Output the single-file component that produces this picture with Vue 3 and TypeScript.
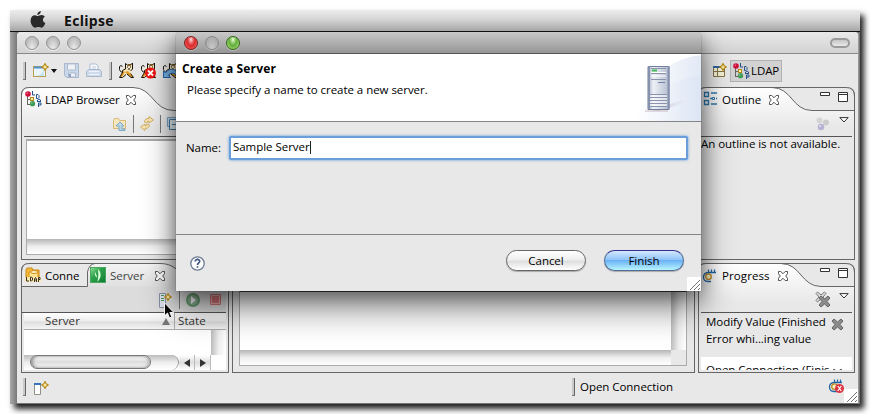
<script setup lang="ts">
interface Task { title: string; detail: string }

const menuTitle = 'Eclipse'
const serverName = 'Sample Server'
const tasks: Task[] = [
  { title: 'Modify Value (Finished', detail: 'Error whi...ing value' },
  { title: 'Open Connection (Finis', detail: '' },
]
const cats = ['plain', 'stop', 'reload']
</script>

<template>
  <div class="stage">
    <svg class="defs" width="0" height="0">
      <defs>
        <linearGradient id="tabfill" x1="0" y1="0" x2="0" y2="1">
          <stop offset="0" stop-color="#fff" /><stop offset="1" stop-color="#e8e8e8" />
        </linearGradient>
        <linearGradient id="servfill" x1="0" y1="0" x2="0" y2="1">
          <stop offset="0" stop-color="#f4f4f4" /><stop offset="1" stop-color="#dedede" />
        </linearGradient>
        <linearGradient id="greenfill" x1="0" y1="0" x2="1" y2="1">
          <stop offset="0" stop-color="#8fe09a" /><stop offset=".4" stop-color="#2fa34b" /><stop offset="1" stop-color="#0c7c33" />
        </linearGradient>
        <symbol id="close" viewBox="0 0 11 11">
          <path d="M.5.5H3L5.5 3 8 .5h2.500V3L8.500 5.500l2 2.500v2.500H8L5.500 8 3 10.500H.5V8l2-2.500L.5 3z" fill="#fff" stroke="#3c3c3c" />
        </symbol>
        <symbol id="ldap" viewBox="0 0 17 16">
          <path d="M2.500 4v10M2 8.500h5M2 13.500h5" stroke="#666" fill="none" />
          <circle cx="3" cy="3" r="2.800" fill="#d0103c" /><circle cx="2.300" cy="2.200" r=".8" fill="#f27a94" />
          <rect x="5.500" y="6.500" width="3" height="3" fill="#fff3a0" stroke="#b58619" />
          <circle cx="7.500" cy="12.700" r="2.600" fill="#3d9b54" /><circle cx="6.800" cy="12" r=".8" fill="#8fd09c" />
          <path d="M7.500 0v4h2.500M11.500 3.500v4h1.500l1-1V4.500l-1-1zM12.500 11V9l1.500-1 1.500 1v2M12.500 10.500h3M13.500 16v-4H16v2h-2" fill="none" stroke="#24508c" stroke-width="1" />
        </symbol>
        <symbol id="cat" viewBox="0 0 17 17">
          <path d="M8 2l2 1h3l2-2v6l-2 2 1 3 2 3h-3l-4-3-4 3H2l3-5-1-3 4-2z" fill="#f3e3bd" />
          <path d="M7 10l3-1 5 6h-2l-4-3zM5 9l2 1-3 5H2z" fill="#e09a1f" />
          <path d="M10 3h3" stroke="#d9a34c" stroke-width="2" />
          <path d="M7.500 7V1.500l2 1.500h3l2-2v6l-2 2M7.500 7l-3 1.500v2l-3 5h3l3.500-3M2.500 9.500l-1-2v-3l1.500-1 1.500 1M2.500 9.500l2 1M9 12l4 3.500h2.500l-3-4" stroke="#19130a" fill="none" />
          <path d="M9 5h1M12 5h1M10 7h2" stroke="#111" />
        </symbol>
        <symbol id="spark" viewBox="0 0 7 7">
          <path d="M3.500.5l1 2 2 1-2 1-1 2-1-2-2-1 2-1z" fill="#fff5b8" stroke="#b88a17" />
        </symbol>
        <symbol id="tri" viewBox="0 0 10 6"><path d="M.8.6h8.400L5 5z" fill="#fff" stroke="#333" /></symbol>
        <symbol id="min" viewBox="0 0 10 4"><path d="M.5.5h9v3h-9z" fill="#fff" stroke="#333" /></symbol>
        <symbol id="max" viewBox="0 0 10 10"><path d="M.5.5h9v9h-9zM.5 2.500h9" fill="#fff" stroke="#333" /></symbol>
        <symbol id="progress" viewBox="0 0 16 15">
          <path d="M14 4.500H7C3 4.500 1.500 6.500 1.500 9s1.500 4.500 4.500 4.500h3" fill="none" stroke="#2366a5" stroke-width="1.300" />
          <path d="M6.500 1.500v3M9.500 1.500v3M12.500 1.500v3" stroke="#2366a5" stroke-width="1.200" />
          <circle cx="6.500" cy="8.700" r="2.800" fill="#fff1bd" stroke="#b88b26" stroke-width="1.300" />
        </symbol>
        <symbol id="cross" viewBox="0 0 13 13">
          <path d="M1 3l2-2 3.500 3L10 1l2 2-3 3.500 3 3.500-2 2-3.500-3L3 12l-2-2 3-3.500z" fill="#8b8b8b" stroke="#666" />
        </symbol>
        <symbol id="grip" viewBox="0 0 14 14">
          <path d="M0 0h14v14H0z" fill="#fff" /><path d="M3 13L13 3M7 13l6-6M11 13l2-2" stroke="#777" />
        </symbol>
      </defs>
    </svg>

    <div class="screen">
      <header class="menubar">
        <svg class="apple" width="16" height="18" viewBox="0 0 16 18">
          <path d="M10.800 0c.2 2-1.600 4-3.500 3.900C7.100 2 9 .2 10.800 0zM8 5c.7 0 2-1 3.800-.9 1.200.1 2.300.6 3 1.600-2.700 1.800-2.300 5.200.6 6.400-.8 2.200-2.200 4.700-3.900 4.700-1.200 0-1.700-.7-3.100-.7s-2 .7-3.100.7C2.800 16.800.5 12.700.6 9.500.7 6 2.700 4.200 5 4.200 6.300 4.200 7.300 5 8 5z" fill="#292929" />
        </svg>
        <b>{{ menuTitle }}</b>
      </header>

      <div class="desktop">
        <section class="window">
          <div class="titlebar">
            <i class="light"></i><i class="light"></i><i class="light"></i>
            <i class="pill"></i>
          </div>

          <div class="toolbar">
            <i class="handle"></i>
            <svg class="t-new" width="16" height="16" viewBox="0 0 16 16">
              <rect x=".5" y="3.500" width="12" height="10" fill="#e9f5fd" stroke="#b99d50" />
              <path d="M1 4.500h11" stroke="#4f91d2" stroke-width="2" />
              <path d="M2 13c5 0 8-3 9-8v8z" fill="#c6e4f7" />
              <use href="#spark" x="8" y="0" width="8" height="8" />
            </svg>
            <svg class="t-arrow" width="6" height="4"><path d="M0 0h6L3 4z" fill="#111" /></svg>
            <svg class="t-save" width="15" height="15" viewBox="0 0 15 15">
              <path d="M.5.5h14v14H2.500l-2-2z" fill="#c9d6e6" stroke="#a9b8cf" /><path d="M3.500 1v6h8V1z" fill="#eef2f7" stroke="#b0bdd1" />
              <path d="M4.500 14v-4h7v4z" fill="#eef2f7" stroke="#a9b8cf" /><path d="M6 11v3" stroke="#8fa1bf" stroke-width="2" />
            </svg>
            <svg class="t-print" width="16" height="15" viewBox="0 0 16 15">
              <path d="M4 8V1h6l2 2v5" fill="#f7f9fc" stroke="#b0bdd1" /><path d="M6 4h4M6 6h4" stroke="#c0ccdd" />
              <path d="M.5 8.500l2-2h11l2 2v5h-15z" fill="#cddaea" stroke="#a9b8cf" /><path d="M3 8.500h10M3 11.500h10" stroke="#eef3fa" />
            </svg>
            <i class="handle"></i>
            <svg v-for="c in cats" :key="c" class="cat" width="17" height="17" viewBox="0 0 17 17">
              <use href="#cat" width="17" height="17" />
              <g v-if="c === 'stop'"><circle cx="10.500" cy="11" r="5.500" fill="#ed1515" /><path d="M8 8.500l5 5M13 8.500l-5 5" stroke="#fff" stroke-width="1.800" /></g>
              <path v-if="c === 'reload'" d="M1.500 15.500V9l2 2c3-5 9-5 12 0v4c-2-4-6-5-9-2l2 2.500z" fill="#75b5e9" stroke="#2a65ab" />
            </svg>
            <span class="grow"></span>
            <svg class="t-open" width="14" height="15" viewBox="0 0 14 15">
              <path d="M.5 3.500h11v10H.5zM.5 8.500h11M4.500 5v8" fill="#f5f2da" stroke="#837443" /><path d="M0 4h9" stroke="#31659d" stroke-width="2" />
              <use href="#spark" x="6" y="0" width="8" height="8" />
            </svg>
            <span class="perspective"><svg width="17" height="16"><use href="#ldap" width="17" height="16" /></svg><span>LDAP</span></span>
          </div>

          <div class="workbench">
            <div class="column left">
              <article class="panel upper">
                <svg class="frame" width="208" height="40">
                  <path d="M1 40V8Q1 1 8 1H112C132 1 132 23.500 153 23.500H207V40z" fill="url(#tabfill)" />
                  <path d="M.5 40V8Q.5.500 8 .5H112C132 .5 132 23.500 153 23.500H208" fill="none" stroke="#666" />
                </svg>
                <div class="tabs">
                  <svg class="tabicon" width="17" height="16"><use href="#ldap" width="17" height="16" /></svg>
                  <span class="tab-browser">LDAP Browser</span>
                  <svg class="x" width="10" height="10"><use href="#close" width="10" height="10" /></svg>
                </div>
                <div class="tools browser-tools">
                  <svg width="14" height="14" viewBox="0 0 14 14"><path d="M.5 3.500l1-2h4l1 2h6v8H.5z" fill="#f6e6bd" stroke="#d8b977" /><path d="M7 5l4 4H9v3h3v1.500H6V9H3z" fill="#b9d6e6" stroke="#7da9c3" /></svg>
                  <i class="sep"></i>
                  <svg width="14" height="15" viewBox="0 0 14 15"><path d="M4.500 6C4.500 3.500 6 2.500 9 2.500v-2l4.500 3.500L9 7V5Q7 5 7 7zM9.500 9c0 2.500-2 3.500-4.500 3.500v2L.5 11 5 8v2q2 0 2-2z" fill="#f7e5b2" stroke="#d0ad65" /></svg>
                  <i class="sep"></i>
                  <svg width="12" height="13" viewBox="0 0 12 13"><path d="M.5.5h10v9H.5z" fill="#c7dff0" stroke="#7ba3c0" /><path d="M2.500 2.500h9v10h-9zM5 7.500h6" fill="#e7f2f8" stroke="#477da7" /></svg>
                </div>
                <div class="tree"><div class="tree-body"></div><div class="track"></div></div>
              </article>

              <article class="panel lower">
                <svg class="frame" width="208" height="25">
                  <path d="M66 25V9Q68 1 74 1H139C157 1 160 12 169 18L180 24H208V25z" fill="url(#servfill)" />
                  <path d="M.5 25V8Q.5.500 8 .5H139C157 .5 160 14 169 19Q174 23.500 184 23.500H208M0 23.500H66.500V9Q68 1 74 .5" fill="none" stroke="#666" />
                </svg>
                <div class="tabs">
                  <svg class="tabicon" width="16" height="16" viewBox="0 0 16 16">
                    <path d="M1 3l1-2h5l1 2h6v8H1z" fill="#f5b93c" stroke="#c8870f" /><path d="M4 5h9v7H4z" fill="#ffe391" stroke="#d79417" /><ellipse cx="9" cy="5" rx="3.500" ry="1.500" fill="#fff5cf" stroke="#d08c17" />
                    <path d="M0 10h16v5H0z" fill="#fbe7b0" />
                    <path d="M1.500 10v4h2.500M5.500 10v4h1l1-1v-2l-1-1zM9.500 15v-3l1-1.500 1 1.500v3M9.500 13h2M13.500 15v-4.500H15v2h-1.500" fill="none" stroke="#3b3424" />
                  </svg>
                  <span class="tab-conne">Conne</span>
                  <svg class="server-icon" width="16" height="16" viewBox="0 0 16 16"><rect x=".5" y=".5" width="15" height="15" fill="url(#greenfill)" stroke="#4aa65d" /><path d="M7.500 15Q9 8 8 2q4 4 2 9-1 2-2.500 4zM5 5q-1 3 2 6-.5-4-2-6z" fill="#ddffd9" /></svg>
                  <span class="tab-server">Server</span>
                  <svg class="x" width="10" height="10"><use href="#close" width="10" height="10" /></svg>
                </div>
                <div class="tools server-tools">
                  <svg width="14" height="16" viewBox="0 0 14 16"><path d="M.5 1.500h6v14h-6z" fill="#dfe3f0" stroke="#8790a3" /><path d="M2 3.500h3M2 6.500h3M2 8.500h3" stroke="#4d9b55" /><use href="#spark" x="5" y="1" width="8" height="8" /></svg>
                  <i class="sep"></i>
                  <svg width="14" height="14" viewBox="0 0 14 14"><circle cx="7" cy="7" r="6" fill="#8cb294" stroke="#659e70" stroke-width="2" /><path d="M5 3l5 4-5 4z" fill="#fff" /></svg>
                  <svg width="11" height="11" viewBox="0 0 11 11"><path d="M.5.5h10v10H.5z" fill="#eab2b2" stroke="#ce7777" /><path d="M2 2h7v7H2z" fill="#d8767a" /></svg>
                </div>
                <div class="table">
                  <div class="thead"><span class="th-server">Server</span><svg width="8" height="7"><path d="M4 0l4 7H0z" fill="#777" /></svg><span class="th-state">State</span></div>
                  <div class="tbody"><div class="rows"></div><div class="vtrack"></div></div>
                  <div class="hscroll">
                    <div class="rail"><i class="thumb"></i></div>
                    <span class="arrow"><svg width="6" height="8"><path d="M6 0v8L0 4z" fill="#333" /></svg></span>
                    <span class="arrow"><svg width="6" height="8"><path d="M0 0v8l6-4z" fill="#333" /></svg></span>
                  </div>
                </div>
              </article>
            </div>

            <div class="panel middle">
              <div class="editor">
                <div class="canvas"></div><div class="vtrack"></div>
                <div class="track"></div><div class="corner"></div>
              </div>
            </div>

            <div class="column right">
              <article class="panel upper">
                <svg class="frame" width="157" height="40">
                  <path d="M1 40V8Q1 1 8 1H74C94 1 94 23.500 114 23.500H156V40z" fill="url(#tabfill)" />
                  <path d="M.5 40V8Q.5.500 8 .5H148Q156.500.500 156.500 9M74 .5C94 .5 94 23.500 114 23.500H157" fill="none" stroke="#666" />
                </svg>
                <div class="tabs right-tabs">
                  <svg width="16" height="16" viewBox="0 0 16 16"><path d="M2.500 1.500h4v4h-4zM2.500 9.500h4v4h-4z" fill="#e6f3fb" stroke="#3179ad" stroke-width="1.300" /><path d="M9 2h6M9 13h6M8 7.500h2M14 7.500h1" stroke="#3179ad" stroke-width="1.300" /><path d="M10.500 6.500h2v2h-2z" fill="#fff" stroke="#3179ad" /></svg>
                  <span class="tab-outline">Outline</span>
                  <svg class="x" width="10" height="10"><use href="#close" width="10" height="10" /></svg>
                  <span class="grow"></span>
                  <svg class="ctl" width="10" height="4"><use href="#min" /></svg>
                  <svg class="ctl" width="10" height="10"><use href="#max" /></svg>
                </div>
                <div class="tools right-tools">
                  <svg class="balls" width="14" height="14" viewBox="0 0 14 14"><circle cx="3.500" cy="3.500" r="3" fill="#d5d5d5" /><circle cx="10" cy="5.500" r="3" fill="#cbcbcb" /><circle cx="5" cy="10" r="3.300" fill="#b8b3d4" /><circle cx="4" cy="9" r="1" fill="#e5e3ef" /></svg>
                  <svg class="ctl" width="10" height="6"><use href="#tri" /></svg>
                </div>
                <p class="empty">An outline is not available.</p>
              </article>

              <article class="panel lower">
                <svg class="frame" width="157" height="40">
                  <path d="M1 40V8Q1 1 8 1H83C103 1 103 23.500 123 23.500H156V40z" fill="url(#tabfill)" />
                  <path d="M.5 40V8Q.5.500 8 .5H148Q156.500.500 156.500 9M83 .5C103 .5 103 23.500 123 23.500H157" fill="none" stroke="#666" />
                </svg>
                <div class="tabs right-tabs">
                  <svg class="progicon" width="16" height="15"><use href="#progress" /></svg>
                  <span class="tab-progress">Progress</span>
                  <svg class="x" width="10" height="10"><use href="#close" width="10" height="10" /></svg>
                  <span class="grow"></span>
                  <svg class="ctl" width="10" height="4"><use href="#min" /></svg>
                  <svg class="ctl" width="10" height="10"><use href="#max" /></svg>
                </div>
                <div class="tools right-tools">
                  <svg class="clear" width="16" height="17" viewBox="0 0 16 17"><path d="M1 2.500L2.500 1l3.500 3 3.500-3L11 2.500 8 6l3 3.500L9.500 11 6 8l-3.500 3L1 9.500 4 6z" fill="#ddd" stroke="#777" /><use href="#cross" x="3" y="4" width="13" height="13" /></svg>
                  <svg class="ctl" width="10" height="6"><use href="#tri" /></svg>
                </div>
                <div class="tasks">
                  <div v-for="t in tasks" :key="t.title" class="task">
                    <div><p>{{ t.title }}</p><p v-if="t.detail">{{ t.detail }}</p></div>
                    <svg width="13" height="13"><use href="#cross" /></svg>
                  </div>
                </div>
              </article>
            </div>
          </div>

          <footer class="status">
            <i class="handle"></i>
            <svg class="fast" width="15" height="15" viewBox="0 0 15 15"><path d="M.5 2.500h6v11h-6z" fill="#fff" stroke="#909184" /><path d="M0 3h7" stroke="#3975b6" stroke-width="2" /><use href="#spark" x="7" y="0" width="8" height="8" /></svg>
            <i class="handle second"></i>
            <span class="job">Open Connection</span>
            <span class="grow"></span>
            <svg class="job-icon" width="17" height="16" viewBox="0 0 17 16"><use href="#progress" width="16" height="15" /><circle cx="11.500" cy="10.500" r="4.500" fill="#dd3542" /><path d="M9.800 8l3.500 5M13.300 8l-3.500 5" stroke="#fff" stroke-width="1.200" /></svg>
            <svg class="grip" width="14" height="14"><use href="#grip" /></svg>
          </footer>
        </section>

        <section class="dialog">
          <div class="dialog-title"><i class="light red"></i><i class="light dim"></i><i class="light green"></i></div>
          <div class="banner">
            <div class="copy"><h1>Create a Server</h1><p>Please specify a name to create a new server.</p></div>
            <svg width="82" height="67" viewBox="0 0 82 67">
              <defs>
                <linearGradient id="arc" x1="0" x2="1"><stop offset="0" stop-color="#fff" /><stop offset="1" stop-color="#dbe4f4" /></linearGradient>
                <linearGradient id="shade" x1="0" x2="1"><stop offset="0" stop-color="#9c8fa8" stop-opacity=".6" /><stop offset="1" stop-color="#c8bccb" stop-opacity="0" /></linearGradient>
                <linearGradient id="tower" x1="0" x2="1"><stop offset="0" stop-color="#a3afc6" /><stop offset=".25" stop-color="#edf1f6" /><stop offset="1" stop-color="#b4bdd1" /></linearGradient>
              </defs>
              <path d="M35 25Q54 4 82 1v66H20Q26 42 35 25z" fill="url(#arc)" opacity=".8" />
              <path d="M15 67Q33 30 82 21v46z" fill="url(#arc)" opacity=".8" />
              <path d="M32 56l32-10q8-1-2 4L40 57z" fill="url(#shade)" />
              <path d="M29 12.500h21v43H29z" fill="url(#tower)" stroke="#747f9b" />
              <path d="M30 12v43M49.500 12v43" stroke="#8591ad" stroke-width="2" />
              <path d="M32 14.500h15M32 19.500h15M32 25.500h15M31 40.500h17M31 43.500h17M31 46.500h17M31 49.500h17M31 52.500h17" stroke="#8993ac" />
              <path d="M32 18.500h15M32 22h15M31 42h17M31 45h17M31 48h17M31 51h17" stroke="#fff" />
              <path d="M33 16.500h5" stroke="#42b950" stroke-width="2" /><path d="M39 28.500h7" stroke="#7483aa" /><path d="M26 57h23" stroke="#c9b9bd" />
            </svg>
          </div>
          <div class="form"><label for="server-name">Name:</label><div id="server-name" class="field">{{ serverName }}<i class="caret"></i></div></div>
          <div class="actions">
            <svg class="help" width="15" height="15" viewBox="0 0 15 15"><circle cx="7.500" cy="7.500" r="6.700" fill="#fff" stroke="#6d7b94" stroke-width="1.300" /><path d="M5.200 5.500C5.200 2.500 10 3 9.700 5.500 9.500 7 7.500 7 7.500 9M7.500 10.200v1.600" fill="none" stroke="#3e5580" stroke-width="1.700" /></svg>
            <span class="grow"></span>
            <button type="button">Cancel</button>
            <button type="button" class="primary">Finish</button>
            <svg class="grip" width="14" height="14"><use href="#grip" /></svg>
          </div>
        </section>

        <svg class="pointer" width="11" height="17" viewBox="0 0 11 17"><path d="M.5.8v13l3-2.800 2 5 2.300-1-2-4.500h4z" fill="#050505" stroke="#fff" stroke-width=".9" /></svg>
      </div>
    </div>
  </div>
</template>

<style>
html, body { margin: 0; background: #fff; }
</style>
<style scoped>
* { box-sizing: border-box; }
svg { display: block; flex: none; }
i { display: block; flex: none; }
p, h1 { margin: 0; }
.defs { position: absolute; }
.grow { flex: 1; }
.stage { width: 870px; height: 414px; padding: 10px; overflow: hidden; background: #fff; font: 11.5px/16px "Open Sans", "Noto Sans", sans-serif; color: #000; letter-spacing: -.04px; white-space: nowrap; }
.screen { width: 850px; height: 394px; box-shadow: 4px 5px 6px rgba(0, 0, 0, .88); }
.menubar { height: 22px; display: flex; align-items: center; padding-left: 20px; background: linear-gradient(#ececec, #d5d5d5 45%, #a6a6a6); border-bottom: 1px solid #111; }
.menubar b { margin-left: 18px; font-size: 14px; line-height: 20px; font-weight: 700; letter-spacing: .3px; color: #111; }
.apple { margin-top: -1px; }
.desktop { position: relative; height: 372px; overflow: hidden; padding-left: 7px; background: linear-gradient(90deg, #aaa, #777 7px, #777); }
.window { width: 842px; height: 372px; background: #e8e8e8; border-radius: 4px 4px 0 0; border-right: 1px solid #999; border-bottom: 1px solid #777; }
.titlebar, .dialog-title { height: 22px; display: flex; align-items: center; padding-left: 8px; gap: 7px; border-bottom: 1px solid #898989; border-radius: 4px 4px 0 0; background: linear-gradient(#e9e9e9, #d2d2d2); }
.light { width: 14px; height: 14px; border-radius: 50%; border: 1px solid #929292; background: radial-gradient(ellipse at 50% 100%, #eee, #c0c0c0 65%, #b5b5b5); box-shadow: 0 1px #f1f1f1; }
.dialog-title .light { box-shadow: 0 1px #bbb; }
.dim { border-color: #888; background: radial-gradient(ellipse at 50% 100%, #ccc, #aeaeae 65%, #a5a5a5); }
.red { border-color: #762323; background: radial-gradient(ellipse at 50% 22%, #ffe3e3 0, #f28989 18%, #d92c2f 45%, #f0534f 80%, #ff9b8d); }
.green { border-color: #37651f; background: radial-gradient(ellipse at 50% 22%, #f2ffe6 0, #a6d983 20%, #63ad3d 45%, #9cd767 80%, #d1f499); }
.pill { width: 20px; height: 10px; margin-left: auto; margin-right: 8px; border: 2px solid #9a9a9a; border-radius: 5px; background: linear-gradient(#c5c5c5, #e9e9e9); }
.toolbar { height: 33px; display: flex; align-items: center; padding: 0 76px 0 6px; }
.handle { width: 3px; height: 18px; background: #c9c9c9; border-right: 1px solid #666; border-bottom: 1px solid #777; }
.t-new { margin-left: 7px; }
.t-arrow { margin-left: 2px; }
.t-save { margin-left: 7px; }
.t-print { margin-left: 7px; }
.t-print + .handle { margin-left: 7px; }
.cat { margin-left: 5px; }
.handle + .cat { margin-left: 6px; }
.t-open { margin-right: 3px; }
.perspective { width: 52px; height: 22px; display: flex; align-items: center; padding-left: 2px; background: #d2d2d2; border: 1px solid #b1b1b1; letter-spacing: -.1px; }
.perspective > span { margin-left: 1px; }
.workbench { height: 286px; display: flex; gap: 3px; padding-left: 4px; }
.column { display: flex; flex-direction: column; gap: 3px; }
.left { width: 208px; }
.right { width: 157px; }
.panel { position: relative; display: flex; flex-direction: column; border: 1px solid #666; border-top: 0; border-radius: 8px 8px 0 0; }
.frame { position: absolute; left: -1px; top: 0; }
.upper { height: 173px; }
.lower { height: 110px; }
.tabs { position: relative; height: 24px; display: flex; align-items: center; padding-left: 3px; flex: none; }
.tabs > span:not(.grow) { padding-top: 2px; }
.x { margin-top: 1px; }
.tab-browser { width: 81px; margin-left: 3px; letter-spacing: -.12px; }
.tools { position: relative; height: 26px; display: flex; align-items: center; margin: 0 2px; border-bottom: 1px solid #555; flex: none; }
.browser-tools { padding-left: 89px; gap: 6px; }
.sep { width: 1px; height: 18px; background: #777; }
.tree { width: 200px; height: 116px; margin: 2px 0 0 4px; border: 1px solid #aaa; border-top: 2px solid #aaa; }
.tree-body { height: 98px; background: #fff; }
.track { height: 15px; background: linear-gradient(#b5b5b5, #eee 50%, #fff); }
.tab-conne { width: 44px; margin-left: 4px; }
.server-icon { margin-left: 1px; }
.tab-server { width: 45px; margin-left: 4px; color: #444; }
.left .lower .tools { height: 26px; background: #dcdcdc; margin-left: 0; padding-left: 137px; }
.server-tools .sep { margin: 0 6px 0 6px; }
.server-tools svg:last-child { margin-left: 10px; }
.table { width: 202px; margin-left: 2px; }
.thead { height: 17px; display: flex; align-items: center; background: linear-gradient(#fff, #eee 50%, #dedede 55%, #f4f4f4); border-bottom: 1px solid #aaa; color: #333; letter-spacing: .1px; }
.th-server { width: 118px; padding-left: 21px; }
.thead svg { margin-left: 20px; }
.th-state { margin-left: 4px; padding-left: 3px; border-left: 1px solid #aaa; }
.tbody { height: 25px; display: flex; }
.rows { width: 187px; background: #fff; }
.vtrack { width: 15px; background: linear-gradient(90deg, #bcbcbc, #eee 50%, #fff); }
.hscroll { height: 15px; display: flex; background: #fff; }
.rail { width: 155px; height: 15px; padding-left: 6px; border-radius: 0 8px 8px 0; background: linear-gradient(#bcbcbc, #eee 50%, #fff); border-right: 1px solid #999; }
.thumb { width: 121px; height: 14px; border: 1px solid #777; border-radius: 8px; background: linear-gradient(#fff, #dcdcdc 48%, #f9f9f9); box-shadow: inset 2px 0 3px #999, inset -2px 0 3px #bbb; }
.arrow { width: 16px; display: flex; justify-content: center; align-items: center; background: linear-gradient(#fff, #ddd 50%, #fff); border-right: 1px solid #bbb; }
.middle { width: 463px; justify-content: flex-end; padding: 0 7px 6px 6px; }
.editor { height: 75px; display: grid; grid-template: 58px 15px / 1fr 15px; border: 1px solid #aaa; border-top: 1px solid #444; }
.canvas { background: #fff; }
.corner { background: #e8e8e8; }
.right-tabs { padding-right: 6px; gap: 0; }
.tab-outline { width: 47px; margin-left: 4px; }
.tab-progress { width: 56px; margin-left: 4px; letter-spacing: .1px; }
.tabs .ctl { align-self: flex-start; margin-top: 5px; margin-left: 8px; }
.right-tools { justify-content: flex-end; padding-right: 3px; gap: 9px; }
.clear { margin-right: -1px; }
.right-tools .ctl { align-self: flex-start; margin-top: 6px; }
.empty { margin: -1px 0 0 2px; }
.tasks { height: 57px; overflow: hidden; margin: 0 2px; }
.task { height: 44px; display: flex; justify-content: space-between; padding: 0 8px 0 5px; line-height: 17px; }
.task + .task { height: 13px; background: #fff; padding-top: 4px; overflow: hidden; }
.task svg { margin-top: 5px; }
.task + .task svg { margin-top: 7px; }
.status { height: 30px; display: flex; align-items: center; padding-left: 6px; }
.status .handle { margin-top: -2px; }
.fast { margin-left: 8px; }
.second { margin-left: 523px; }
.job { margin-left: 5px; margin-top: -2px; }
.job-icon { margin-right: -1px; margin-top: -4px; }
.grip { align-self: flex-end; }
.dialog { position: absolute; left: 166px; top: 0; width: 525px; height: 259px; background: #e8e8e8; border-radius: 5px 5px 0 0; box-shadow: 0 18px 34px rgba(0, 0, 0, .46), 0 4px 20px rgba(0, 0, 0, .42), 0 0 1px #333; }
.dialog-title { background: linear-gradient(#c9c9c9, #969696); border-color: #555; }
.banner { height: 68px; display: flex; justify-content: space-between; background: #fff; border-bottom: 1px solid #858585; }
.copy { padding: 7px 0 0 6px; }
h1 { font-size: 12px; line-height: 16px; letter-spacing: .15px; }
.copy p { padding: 5px 0 0 5px; }
.form { height: 112px; display: flex; align-items: flex-start; padding: 14px 13px 0 10px; }
.form label { width: 43px; padding-top: 4px; }
.field { flex: 1; display: flex; height: 24px; border: 2px solid #6b9fda; background: #fff; padding: 1px 2px; border-radius: 2px; box-shadow: 0 0 3px #5b96da; }
.caret { width: 1px; height: 13px; margin-top: 2px; background: #222; }
.actions { height: 57px; display: flex; align-items: center; padding-left: 14px; border-top: 1px solid #858585; }
button { width: 80px; height: 21px; margin-right: 18px; margin-top: -5px; padding: 0; font: inherit; letter-spacing: inherit; border: 1px solid #666; border-radius: 11px; background: linear-gradient(#fff, #eee 48%, #ddd 52%, #fff); box-shadow: 0 1px 1px #aaa; }
.primary { margin-right: 3px; border-color: #31318d #526c98 #526c98; background: linear-gradient(#d4e8fc, #91c5fa 45%, #6bb1f6 50%, #b8f5ff); }
.pointer { position: absolute; left: 154px; top: 270px; }
</style>
